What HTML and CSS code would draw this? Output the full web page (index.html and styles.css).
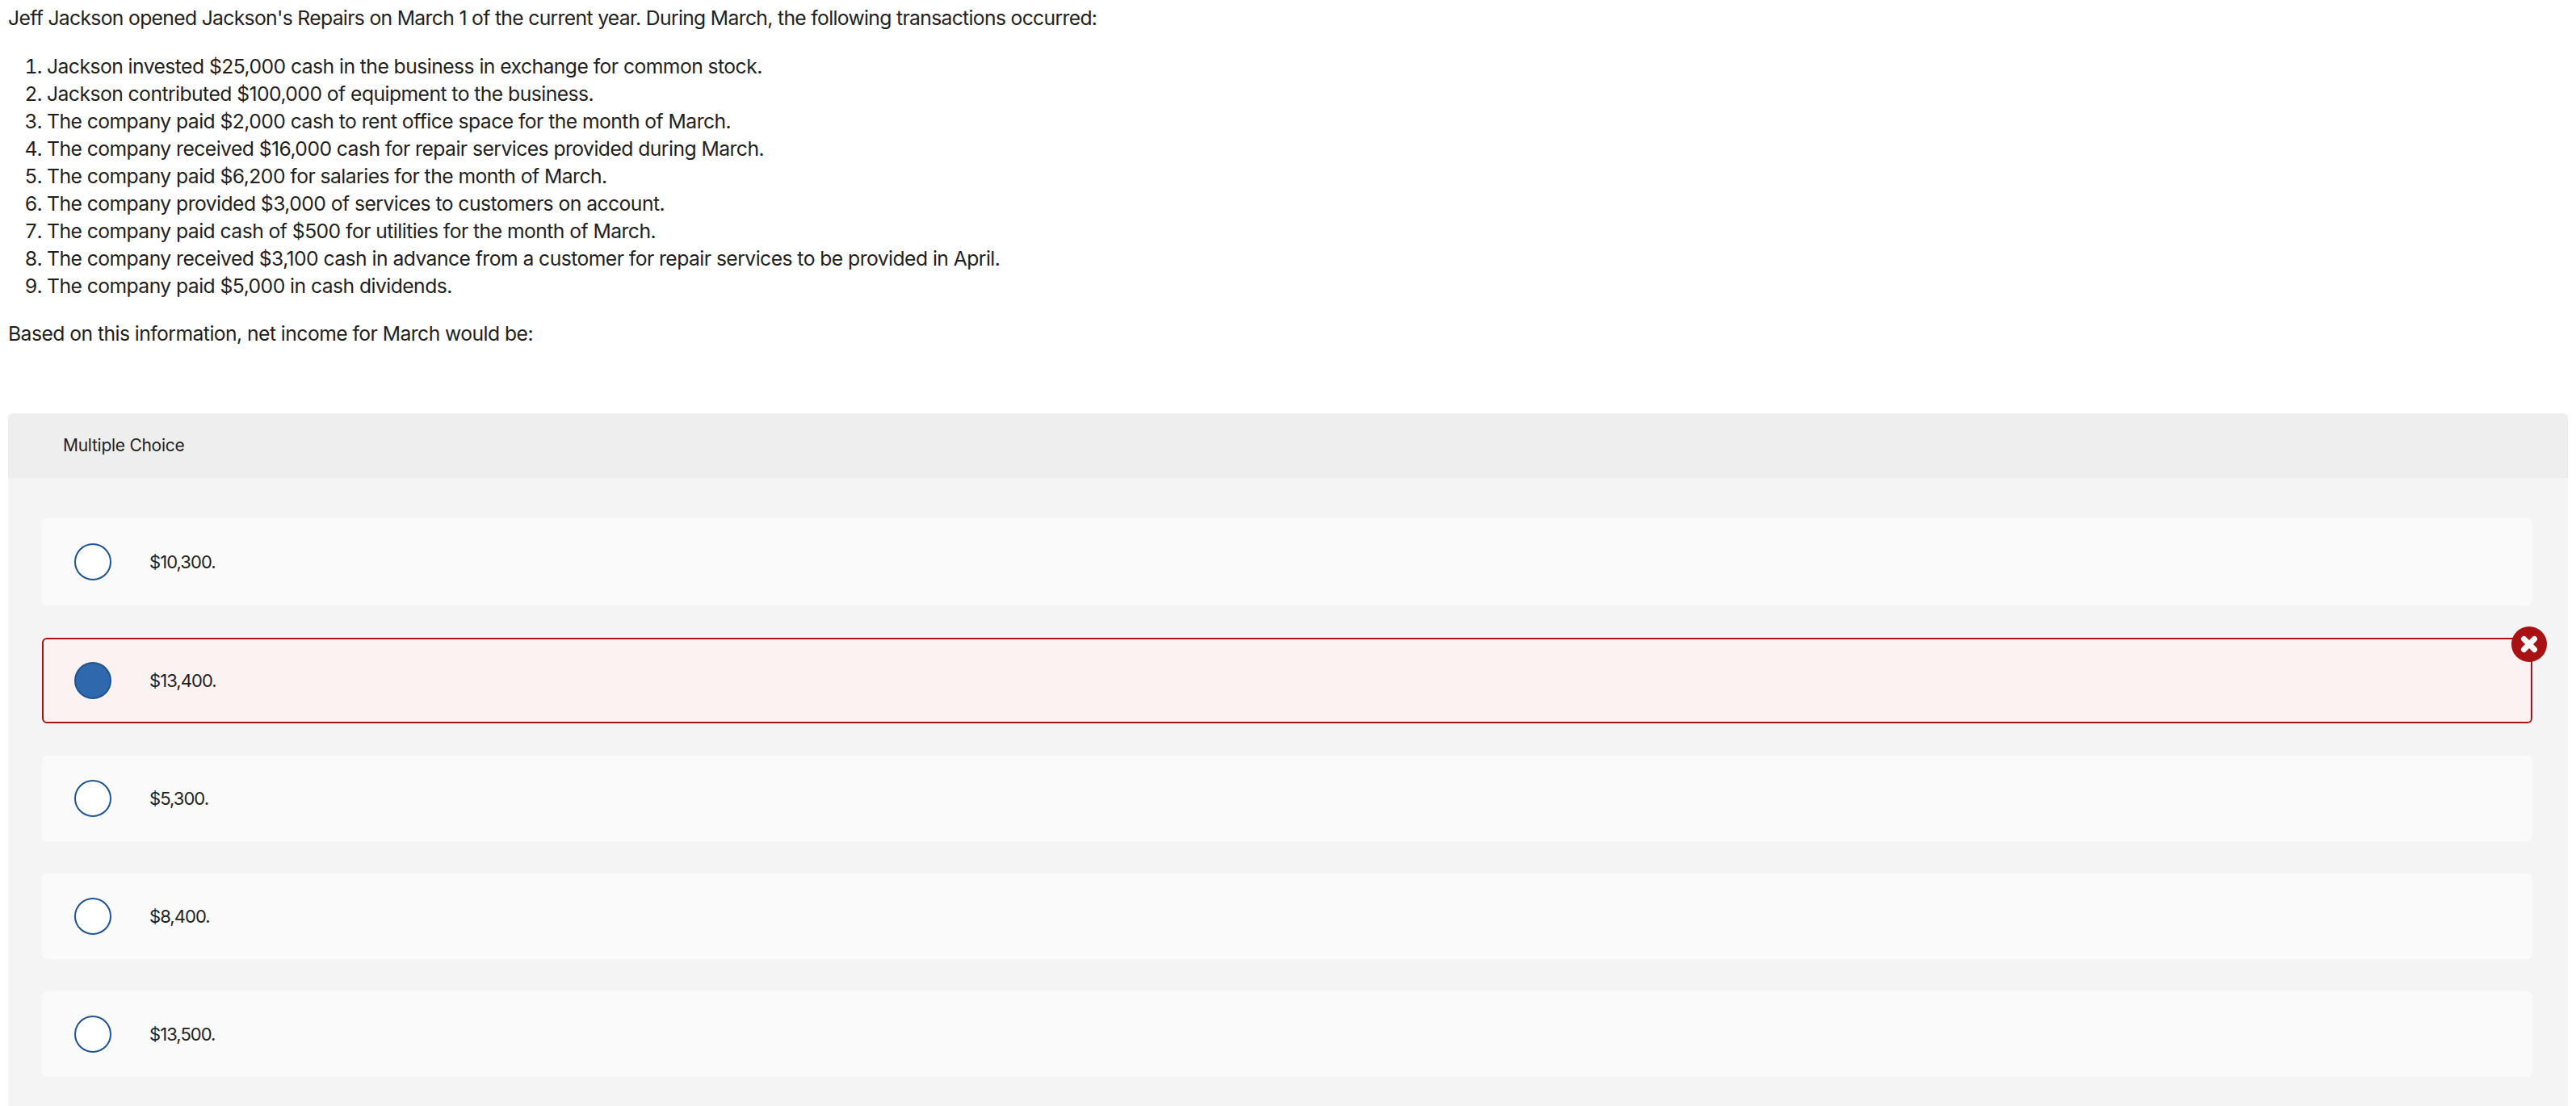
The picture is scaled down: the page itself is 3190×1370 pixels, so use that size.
FILE: index.html
```html
<!DOCTYPE html>
<html lang="en">
<head>
<meta charset="utf-8">
<title>Multiple Choice</title>
<link rel="stylesheet" href="styles.css">
</head>
<body>
<section class="prompt">
  <p class="intro">Jeff Jackson opened Jackson's Repairs on March 1 of the current year. During March, the following transactions occurred:</p>
  <ol class="steps">
    <li>Jackson invested $25,000 cash in the business in exchange for common stock.</li>
    <li>Jackson contributed $100,000 of equipment to the business.</li>
    <li>The company paid $2,000 cash to rent office space for the month of March.</li>
    <li>The company received $16,000 cash for repair services provided during March.</li>
    <li>The company paid $6,200 for salaries for the month of March.</li>
    <li>The company provided $3,000 of services to customers on account.</li>
    <li>The company paid cash of $500 for utilities for the month of March.</li>
    <li>The company received $3,100 cash in advance from a customer for repair services to be provided in April.</li>
    <li>The company paid $5,000 in cash dividends.</li>
  </ol>
  <p class="question">Based on this information, net income for March would be:</p>
</section>
<section class="panel">
  <header class="panel-head">Multiple Choice</header>
  <div class="choices">
    <div class="choice"><span class="radio"></span><span class="label">$10,300.</span></div>
    <div class="choice wrong"><span class="radio checked"></span><span class="label">$13,400.</span>
      <svg class="badge" viewBox="0 0 44 44" width="44" height="44" aria-hidden="true"><circle cx="22" cy="22" r="22" fill="#a81212"/><path d="M15.5 15.5 L28.5 28.5 M28.5 15.5 L15.5 28.5" stroke="#fff" stroke-width="7" stroke-linecap="round"/></svg>
    </div>
    <div class="choice"><span class="radio"></span><span class="label">$5,300.</span></div>
    <div class="choice"><span class="radio"></span><span class="label">$8,400.</span></div>
    <div class="choice"><span class="radio"></span><span class="label">$13,500.</span></div>
  </div>
</section>
</body>
</html>
```
FILE: styles.css
```css
html, body { margin: 0; padding: 0; background: #fff; }
body {
  height: 1370px;
  overflow: hidden;
  font-family: "Inter", "Liberation Sans", sans-serif;
  color: #1f1f1f;
}
.prompt {
  font-size: 24.7px;
  letter-spacing: -0.55px;
  line-height: 34px;
  padding: 5px 10px 0;
  height: 512px;
  box-sizing: border-box;
}
.intro { margin: 0 0 26px; letter-spacing: -0.67px; }
.steps { margin: 0 0 25px; padding: 0 0 0 48px; }
.question { margin: 0; }
.panel {
  height: 858px;
  margin: 0 10px;
  box-sizing: border-box;
  background: #f4f4f4;
  border-radius: 6px 6px 0 0;
}
.panel-head {
  height: 80px;
  box-sizing: border-box;
  padding: 0 0 2px 68px;
  display: flex;
  align-items: center;
  background: #eeeeee;
  border-radius: 6px 6px 0 0;
  font-size: 21px;
  letter-spacing: -0.27px;
}
.choices {
  display: flex;
  flex-direction: column;
  gap: 40px;
  padding: 50px 44px 0 42px;
}
.choice {
  position: relative;
  height: 106px;
  box-sizing: border-box;
  display: flex;
  align-items: center;
  padding-left: 40px;
  background: #fafafa;
  border-radius: 6px;
}
.choice:first-child { height: 108px; }
.choice.wrong {
  background: #fcf2f2;
  border: 2px solid #ac1212;
  padding-left: 38px;
}
.radio {
  width: 46px;
  height: 46px;
  box-sizing: border-box;
  flex: none;
  border: 2px solid #1f5490;
  border-radius: 50%;
  background: #fff;
}
.radio.checked { background: #2f68ad; }
.label { margin-left: 47px; font-size: 22px; letter-spacing: -0.95px; }
.badge { position: absolute; top: -16px; right: -20px; }
```
